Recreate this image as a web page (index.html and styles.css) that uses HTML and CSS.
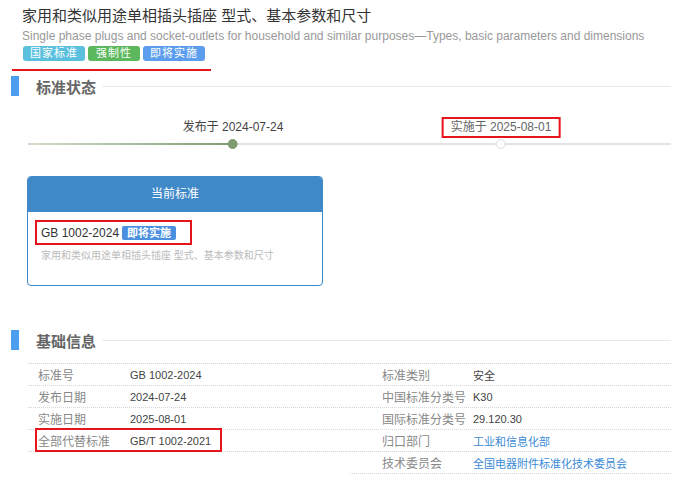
FILE: index.html
```html
<!DOCTYPE html>
<html lang="zh-CN">
<head>
    <meta charset="UTF-8">
    <meta name="viewport" content="width=device-width, initial-scale=1.0">
    <title>GB 1002-2024</title>
    <link rel="stylesheet" href="styles.css">
</head>
<body>
    <div class="page">
        <div class="head">
            <h1 class="title">家用和类似用途单相插头插座 型式、基本参数和尺寸</h1>
            <p class="subtitle">Single phase plugs and socket-outlets for household and similar purposes—Types, basic parameters and dimensions</p>
            <div class="tags">
                <span class="tag tag-cyan">国家标准</span>
                <span class="tag tag-green">强制性</span>
                <span class="tag tag-blue">即将实施</span>
            </div>
        </div>
        <div class="head-mark"></div>

        <section class="block">
            <h2 class="sec-title">
                <span class="sec-bar"></span>
                <span class="sec-text">标准状态</span>
                <span class="sec-line"></span>
            </h2>

            <div class="timeline">
                <div class="tl-track"><div class="tl-done"></div></div>
                <div class="tl-node node-pub">
                    <span class="tl-label">发布于 2024-07-24</span>
                    <span class="tl-dot dot-done"></span>
                </div>
                <div class="tl-node node-impl">
                    <span class="tl-label marked">实施于 2025-08-01</span>
                    <span class="tl-dot"></span>
                </div>
            </div>

            <div class="card">
                <div class="card-head">当前标准</div>
                <div class="card-body">
                    <div class="cur-line">
                        <span class="cur-code">GB 1002-2024</span>
                        <span class="badge">即将实施</span>
                    </div>
                    <div class="cur-desc">家用和类似用途单相插头插座 型式、基本参数和尺寸</div>
                </div>
            </div>
        </section>

        <section class="block block-info">
            <h2 class="sec-title">
                <span class="sec-bar"></span>
                <span class="sec-text">基础信息</span>
                <span class="sec-line"></span>
            </h2>

            <div class="info">
                <div class="info-col">
                    <div class="row"><span class="lbl">标准号</span><span class="val">GB 1002-2024</span></div>
                    <div class="row"><span class="lbl">发布日期</span><span class="val">2024-07-24</span></div>
                    <div class="row"><span class="lbl">实施日期</span><span class="val">2025-08-01</span></div>
                    <div class="row"><span class="lbl">全部代替标准</span><span class="val">GB/T 1002-2021</span><span class="row-mark"></span></div>
                </div>
                <div class="info-col col-right">
                    <div class="row"><span class="lbl">标准类别</span><span class="val">安全</span></div>
                    <div class="row"><span class="lbl">中国标准分类号</span><span class="val">K30</span></div>
                    <div class="row"><span class="lbl">国际标准分类号</span><span class="val">29.120.30</span></div>
                    <div class="row"><span class="lbl">归口部门</span><a class="val link" href="#">工业和信息化部</a></div>
                    <div class="row"><span class="lbl">技术委员会</span><a class="val link" href="#">全国电器附件标准化技术委员会</a></div>
                </div>
            </div>
        </section>
    </div>
</body>
</html>
```

FILE: styles.css
```css
body {
    margin: 0;
    background: #fff;
    font-family: "Liberation Sans", "Noto Sans CJK SC", sans-serif;
    color: #333;
}
.page { padding: 0 28px 0 11px; width: 660px; }

/* header */
.head { padding: 6px 0 0 11px; }
.title { margin: 0; font-size: 15px; line-height: 20px; font-weight: normal; color: #333; }
.subtitle { margin: 2px 0 0; font-size: 12px; line-height: 16px; color: #999; white-space: nowrap; }
.tags { display: flex; gap: 3px; margin-top: 2px; padding-left: 1px; }
.tag {
    font-size: 11px;
    line-height: 15px;
    padding: 0 7px;
    letter-spacing: 1px;
    color: #fff;
    border-radius: 3px;
}
.tag-cyan { background: #5bc0de; }
.tag-green { background: #5cb85c; padding: 0 8px; }
.tag-blue { background: #5d9ded; }
.head-mark { width: 199px; height: 2px; margin: 8px 0 0 1px; background: #e8141c; }

/* section title */
.block { margin-top: 5px; }
.block-info { margin-top: 44px; }
.sec-title { display: flex; align-items: center; height: 20px; margin: 0; }
.sec-bar { width: 8px; height: 20px; background: #4d9ef0; }
.sec-text { margin-left: 17px; font-size: 15px; font-weight: bold; color: #666; }
.sec-line { flex: 1; height: 1px; margin-left: 6px; background: #eaeaea; }

/* timeline */
.timeline { position: relative; height: 32px; margin: 21px 0 0 17px; }
.tl-track { position: absolute; left: 0; right: 0; top: 26px; height: 2px; background: #e2e2e2; }
.tl-done { width: 205px; height: 2px; background: linear-gradient(to right, #d3ddcd, #7d9c70); }
.tl-node {
    position: absolute;
    top: 0;
    display: flex;
    flex-direction: column;
    align-items: center;
    transform: translateX(-50%);
}
.node-pub { left: 205px; }
.node-impl { left: 473px; }
.tl-label {
    font-size: 12px;
    line-height: 15px;
    padding: 1px 7px;
    border: 2px solid transparent;
    white-space: nowrap;
    color: #444;
}
.tl-label.marked { border-color: #e8141c; color: #666; }
.tl-dot {
    width: 8px;
    height: 8px;
    margin-top: 1px;
    border: 1px solid #ddd;
    border-radius: 50%;
    background: #fff;
}
.tl-dot.dot-done { background: #7d9c70; border-color: #7d9c70; }

/* current standard card */
.card {
    width: 296px;
    height: 110px;
    box-sizing: border-box;
    margin: 27px 0 0 16px;
    border: 1px solid #3f89c8;
    border-radius: 4px;
    overflow: hidden;
}
.card-head {
    height: 35px;
    line-height: 35px;
    text-align: center;
    font-size: 12px;
    color: #fff;
    background: #3f89c8;
}
.card-body { padding: 8px 0 0 7px; }
.cur-line {
    display: inline-flex;
    align-items: center;
    gap: 3px;
    height: 25px;
    box-sizing: border-box;
    padding: 0 14px 0 4px;
    border: 2px solid #e8141c;
}
.cur-code { font-size: 12px; color: #333; }
.badge {
    font-size: 11px;
    line-height: 14px;
    padding: 0 5px;
    font-weight: bold;
    color: #fff;
    background: #4a8fe0;
    border-radius: 2px;
}
.cur-desc { margin-top: 4px; padding-left: 6px; font-size: 10px; line-height: 14px; color: #bbb; }

/* base info */
.info { display: grid; grid-template-columns: 322px 321px; margin: 13px 0 0 17px; }
.info-col { border-top: 1px dotted #d6d6d6; }
.row {
    position: relative;
    display: flex;
    align-items: center;
    height: 22px;
    box-sizing: border-box;
    padding-left: 10px;
    border-bottom: 1px dotted #d6d6d6;
}
.lbl { width: 92px; flex: none; font-size: 12px; color: #888; }
.val { font-size: 11px; color: #444; text-decoration: none; }
.val.link { color: #3b8ad6; }
.col-right .row { padding-left: 32px; }
.col-right .lbl { width: 91px; }
.row-mark {
    position: absolute;
    left: 7px;
    top: -2px;
    width: 187px;
    height: 24px;
    border: 2px solid #e8141c;
    box-sizing: border-box;
}
```
